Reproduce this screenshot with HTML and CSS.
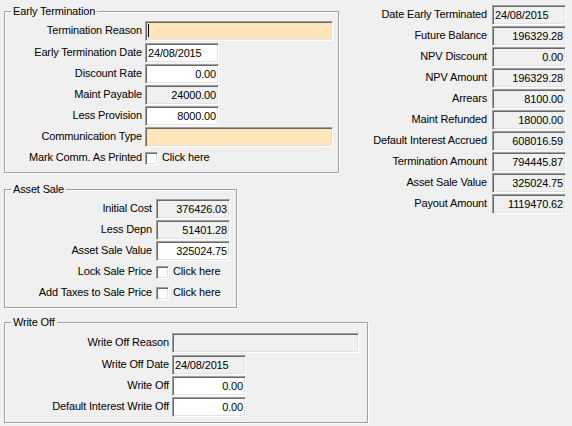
FILE: index.html
```html
<!DOCTYPE html>
<html>
<head>
<meta charset="utf-8">
<link rel="stylesheet" href="styles.css">
</head>
<body>
<div class="page">
  <div class="left">
    <fieldset class="group et">
      <legend>Early Termination</legend>
      <div class="row"><div class="lbl">Termination Reason</div><div class="tb hl wide"><span class="caret"></span></div></div>
      <div class="row first2"><div class="lbl">Early Termination Date</div><div class="tb">24/08/2015</div></div>
      <div class="row"><div class="lbl">Discount Rate</div><div class="tb num">0.00</div></div>
      <div class="row"><div class="lbl">Maint Payable</div><div class="tb ro num">24000.00</div></div>
      <div class="row"><div class="lbl">Less Provision</div><div class="tb num">8000.00</div></div>
      <div class="row"><div class="lbl">Communication Type</div><div class="tb hl wide"></div></div>
      <div class="row"><div class="lbl">Mark Comm. As Printed</div><div class="cb"></div><div class="cbtxt">Click here</div></div>
    </fieldset>
    <fieldset class="group as">
      <legend>Asset Sale</legend>
      <div class="row"><div class="lbl">Initial Cost</div><div class="tb ro num">376426.03</div></div>
      <div class="row"><div class="lbl">Less Depn</div><div class="tb ro num">51401.28</div></div>
      <div class="row"><div class="lbl">Asset Sale Value</div><div class="tb num">325024.75</div></div>
      <div class="row"><div class="lbl">Lock Sale Price</div><div class="cb"></div><div class="cbtxt">Click here</div></div>
      <div class="row"><div class="lbl">Add Taxes to Sale Price</div><div class="cb"></div><div class="cbtxt">Click here</div></div>
    </fieldset>
    <fieldset class="group wo">
      <legend>Write Off</legend>
      <div class="row"><div class="lbl">Write Off Reason</div><div class="tb ro wide2"></div></div>
      <div class="row first2"><div class="lbl">Write Off Date</div><div class="tb ro">24/08/2015</div></div>
      <div class="row"><div class="lbl">Write Off</div><div class="tb num">0.00</div></div>
      <div class="row"><div class="lbl">Default Interest Write Off</div><div class="tb num">0.00</div></div>
    </fieldset>
  </div>
  <div class="right">
    <div class="lbl">Date Early Terminated</div><div class="tb ro">24/08/2015</div>
    <div class="lbl">Future Balance</div><div class="tb ro num">196329.28</div>
    <div class="lbl">NPV Discount</div><div class="tb ro num">0.00</div>
    <div class="lbl">NPV Amount</div><div class="tb ro num">196329.28</div>
    <div class="lbl">Arrears</div><div class="tb ro num">8100.00</div>
    <div class="lbl">Maint Refunded</div><div class="tb ro num">18000.00</div>
    <div class="lbl">Default Interest Accrued</div><div class="tb ro num">608016.59</div>
    <div class="lbl">Termination Amount</div><div class="tb ro num">794445.87</div>
    <div class="lbl">Asset Sale Value</div><div class="tb ro num">325024.75</div>
    <div class="lbl">Payout Amount</div><div class="tb ro num">1119470.62</div>
  </div>
</div>
</body>
</html>
```
FILE: styles.css
```css
html, body {
  margin: 0;
  padding: 0;
}
body {
  background: #f0f0f0;
  font-family: "Liberation Sans", Arial, sans-serif;
  font-size: 11px;
  letter-spacing: -0.15px;
  color: #000;
  width: 572px;
  height: 426px;
  overflow: hidden;
}
.page {
  display: flex;
  align-items: flex-start;
}
.left {
  width: 364px;
  margin-left: 4px;
  display: flex;
  flex-direction: column;
  align-items: flex-start;
}
.group {
  margin: 0;
  padding: 3px 0 4px 0;
  border: 1px solid #a0a0a0;
  box-shadow: 1px 1px 0 #fff, inset 1px 1px 0 #fff;
  box-sizing: border-box;
  min-width: 0;
}
.group legend {
  margin-left: 6px;
  padding: 0 2px;
  line-height: 13px;
  background: #f0f0f0;
}
.et {
  width: 335px;
  margin-top: 5px;
}
.as {
  width: 233px;
  margin-top: 10px;
}
.wo {
  width: 364px;
  margin-top: 8px;
  padding-top: 4px;
  padding-bottom: 5px;
}
.row {
  display: flex;
  align-items: flex-start;
  height: 20px;
  margin-top: 1px;
}
.row:first-of-type {
  margin-top: 0;
}
.row.first2 {
  margin-top: 2px;
}
.lbl {
  text-align: right;
  line-height: 18px;
  white-space: nowrap;
  box-sizing: border-box;
}
.et .lbl {
  width: 137px;
  margin-right: 3px;
}
.as .lbl {
  width: 147px;
  margin-right: 4px;
}
.wo .lbl {
  width: 164px;
  margin-right: 3px;
}
.tb {
  position: relative;
  box-sizing: border-box;
  height: 20px;
  width: 74px;
  border: 1px solid;
  border-color: #a0a0a0 #fff #fff #a0a0a0;
  box-shadow: inset 1px 1px 0 #696969, inset -1px -1px 0 #e3e3e3;
  background: #fff;
  padding: 0 2px;
  line-height: 18px;
  white-space: nowrap;
  overflow: hidden;
}
.tb.ro {
  background: #f0f0f0;
}
.tb.hl {
  background: #ffe5b9;
}
.tb.num {
  text-align: right;
}
.tb.wide {
  width: 188px;
}
.tb.wide2 {
  width: 187px;
}
.caret {
  position: absolute;
  left: 2px;
  top: 2px;
  width: 1px;
  height: 13px;
  background: #000;
}
.cb {
  box-sizing: border-box;
  width: 13px;
  height: 13px;
  margin: 4px 4px 0 0;
  border: 1px solid;
  border-color: #a0a0a0 #fff #fff #a0a0a0;
  box-shadow: inset 1px 1px 0 #696969, inset -1px -1px 0 #e3e3e3;
  background: #fff;
}
.cbtxt {
  line-height: 18px;
  white-space: nowrap;
}
.right {
  display: grid;
  grid-template-columns: 119px 74px;
  grid-auto-rows: 20px;
  column-gap: 5px;
  row-gap: 1px;
  margin-top: 5px;
}
```
